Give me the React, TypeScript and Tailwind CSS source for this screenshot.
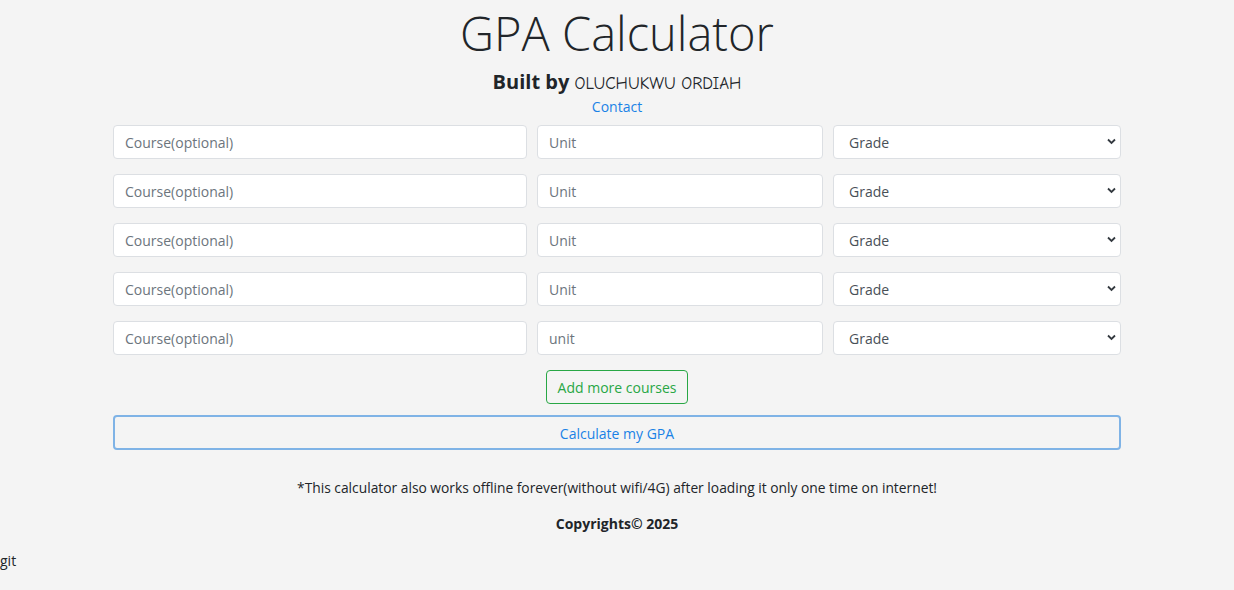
import React from 'react';

const font = { fontFamily: '"Open Sans", "Noto Sans", sans-serif' };

const CourseRow = ({ unitLabel }: { unitLabel: string }) => (
  <div className="grid grid-cols-[414px_286px_288px] gap-[10px]">
    <input
      className="h-[34px] rounded-[4px] border border-[#dcdfe3] bg-white px-[11px] text-[14px] text-[#495057] placeholder:text-[#6c757d] outline-none"
      placeholder="Course(optional)"
    />
    <input
      className="h-[34px] rounded-[4px] border border-[#dcdfe3] bg-white px-[11px] text-[14px] text-[#495057] placeholder:text-[#6c757d] outline-none"
      placeholder={unitLabel}
    />
    <div className="relative">
      <select className="h-[34px] w-full appearance-none rounded-[4px] border border-[#dcdfe3] bg-white pl-[15px] text-[14px] text-[#495057] outline-none">
        <option>Grade</option>
      </select>
      <svg
        className="pointer-events-none absolute right-[5px] top-[13px]"
        width="9"
        height="7"
        viewBox="0 0 9 7"
      >
        <path d="M1 1.5 L4.5 5 L8 1.5" fill="none" stroke="#343a40" strokeWidth="1.8" />
      </svg>
    </div>
  </div>
);

export default function App() {
  return (
    <div className="min-h-[590px] bg-[#f4f4f4] text-[#212529]" style={font}>
      <div className="flex flex-col items-center">
        <h1 className="mt-[3px] text-[47px] font-light leading-[60px] text-[#212529]">GPA Calculator</h1>
        <div className="mt-[7px] text-[20px] leading-[24px]">
          <span className="font-bold">Built by </span>
          <span style={{ fontFamily: '"Comic Neue", "DejaVu Sans", sans-serif' }} className="text-[17px]">
            OLUCHUKWU ORDIAH
          </span>
        </div>
        <a className="mt-[1px] text-[14px] leading-[20px] text-[#1a82e6]">Contact</a>
        <div className="mt-[8px] flex flex-col gap-[15px]">
          <CourseRow unitLabel="Unit" />
          <CourseRow unitLabel="Unit" />
          <CourseRow unitLabel="Unit" />
          <CourseRow unitLabel="Unit" />
          <CourseRow unitLabel="unit" />
        </div>
        <button className="mt-[15px] h-[34px] rounded-[4px] border border-[#28a745] px-[11px] text-[14px] text-[#28a745]">
          Add more courses
        </button>
        <button className="mt-[11px] h-[35px] w-[1008px] rounded-[4px] border-2 border-[#7fb3e6] pt-[1px] text-[14px] text-[#1a82e6]">
          Calculate my GPA
        </button>
        <p className="mt-[28px] text-[13.8px] leading-[20px] text-[#212529]">
          *This calculator also works offline forever(without wifi/4G) after loading it only one time on internet!
        </p>
        <p className="mt-[16px] text-[14px] font-bold leading-[20px]">Copyrights© 2025</p>
      </div>
      <div className="mt-[17px] text-[14px] leading-[20px]">git</div>
    </div>
  );
}
